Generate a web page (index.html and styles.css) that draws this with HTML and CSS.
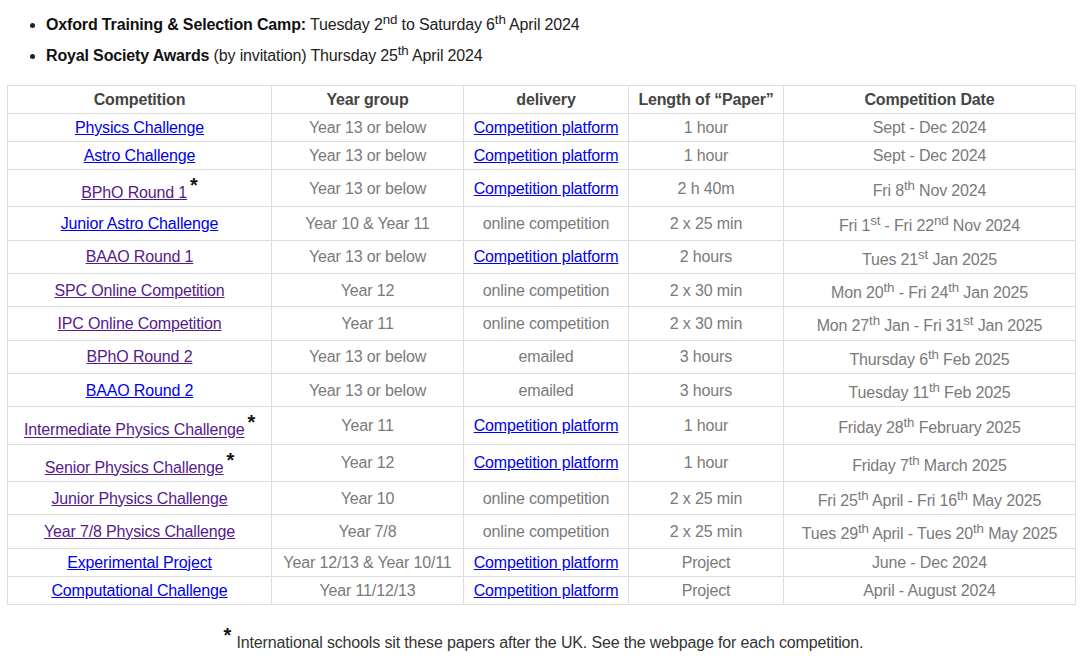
FILE: index.html
```html
<!DOCTYPE html>
<html lang="en">
<head>
<meta charset="utf-8">
<title>Competitions</title>
<link rel="stylesheet" href="styles.css">
</head>
<body>
<div class="page">
  <ul class="events">
    <li><b>Oxford Training &amp; Selection Camp:</b> Tuesday 2<sup>nd</sup> to Saturday 6<sup>th</sup> April 2024</li>
    <li><b>Royal Society Awards</b> (by invitation) Thursday 25<sup>th</sup> April 2024</li>
  </ul>

  <table class="comp">
    <colgroup>
      <col class="c1"><col class="c2"><col class="c3"><col class="c4"><col class="c5">
    </colgroup>
    <thead>
      <tr><th>Competition</th><th>Year group</th><th>delivery</th><th>Length of “Paper”</th><th>Competition Date</th></tr>
    </thead>
    <tbody>
      <tr><td><a href="#">Physics Challenge</a></td><td>Year 13 or below</td><td><a href="#">Competition platform</a></td><td>1 hour</td><td>Sept - Dec 2024</td></tr>
      <tr><td><a href="#">Astro Challenge</a></td><td>Year 13 or below</td><td><a href="#">Competition platform</a></td><td>1 hour</td><td>Sept - Dec 2024</td></tr>
      <tr><td><a class="v" href="#">BPhO Round 1</a><sup class="star">*</sup></td><td>Year 13 or below</td><td><a href="#">Competition platform</a></td><td>2 h 40m</td><td>Fri 8<sup>th</sup> Nov 2024</td></tr>
      <tr><td><a href="#">Junior Astro Challenge</a></td><td>Year 10 &amp; Year 11</td><td>online competition</td><td>2 x 25 min</td><td>Fri 1<sup>st</sup> - Fri 22<sup>nd</sup> Nov 2024</td></tr>
      <tr><td><a class="v" href="#">BAAO Round 1</a></td><td>Year 13 or below</td><td><a href="#">Competition platform</a></td><td>2 hours</td><td>Tues 21<sup>st</sup> Jan 2025</td></tr>
      <tr><td><a class="v" href="#">SPC Online Competition</a></td><td>Year 12</td><td>online competition</td><td>2 x 30 min</td><td>Mon 20<sup>th</sup> - Fri 24<sup>th</sup> Jan 2025</td></tr>
      <tr><td><a class="v" href="#">IPC Online Competition</a></td><td>Year 11</td><td>online competition</td><td>2 x 30 min</td><td>Mon 27<sup>th</sup> Jan - Fri 31<sup>st</sup> Jan 2025</td></tr>
      <tr><td><a class="v" href="#">BPhO Round 2</a></td><td>Year 13 or below</td><td>emailed</td><td>3 hours</td><td>Thursday 6<sup>th</sup> Feb 2025</td></tr>
      <tr><td><a href="#">BAAO Round 2</a></td><td>Year 13 or below</td><td>emailed</td><td>3 hours</td><td>Tuesday 11<sup>th</sup> Feb 2025</td></tr>
      <tr><td><a class="v" href="#">Intermediate Physics Challenge</a><sup class="star">*</sup></td><td>Year 11</td><td><a href="#">Competition platform</a></td><td>1 hour</td><td>Friday 28<sup>th</sup> February 2025</td></tr>
      <tr><td><a class="v" href="#">Senior Physics Challenge</a><sup class="star">*</sup></td><td>Year 12</td><td><a href="#">Competition platform</a></td><td>1 hour</td><td>Friday 7<sup>th</sup> March 2025</td></tr>
      <tr><td><a class="v" href="#">Junior Physics Challenge</a></td><td>Year 10</td><td>online competition</td><td>2 x 25 min</td><td>Fri 25<sup>th</sup> April - Fri 16<sup>th</sup> May 2025</td></tr>
      <tr><td><a class="v" href="#">Year 7/8 Physics Challenge</a></td><td>Year 7/8</td><td>online competition</td><td>2 x 25 min</td><td>Tues 29<sup>th</sup> April - Tues 20<sup>th</sup> May 2025</td></tr>
      <tr><td><a href="#">Experimental Project</a></td><td>Year 12/13 &amp; Year 10/11</td><td><a href="#">Competition platform</a></td><td>Project</td><td>June - Dec 2024</td></tr>
      <tr><td><a href="#">Computational Challenge</a></td><td>Year 11/12/13</td><td><a href="#">Competition platform</a></td><td>Project</td><td>April - August 2024</td></tr>
    </tbody>
  </table>

  <p class="note"><sup class="star">*</sup> International schools sit these papers after the UK. See the webpage for each competition.</p>
</div>
</body>
</html>
```

FILE: styles.css
```css
html, body {
  margin: 0;
  padding: 0;
  background: #ffffff;
}

body {
  font-family: "Liberation Sans", Arial, sans-serif;
  font-size: 16px;
  letter-spacing: -0.15px;
  color: #222222;
}

.page {
  padding: 9px 0 0 7px;
}

.events {
  margin: 0 0 14px 0;
  padding-left: 39px;
  color: #222222;
}

.events li {
  line-height: 31px;
}

.events b {
  color: #111111;
}

.events sup {
  line-height: 0;
}

.comp {
  border-collapse: collapse;
  table-layout: fixed;
  width: 1068px;
}

.c1 { width: 264px; }
.c2 { width: 192px; }
.c3 { width: 165px; }
.c4 { width: 155px; }
.c5 { width: 292px; }

.comp th,
.comp td {
  border: 1px solid #dddddd;
  padding: 4px 4px;
  text-align: center;
  vertical-align: middle;
  line-height: 19px;
  white-space: nowrap;
}

.comp th {
  color: #444444;
  font-weight: bold;
}

.comp td {
  color: #7a7a7a;
}

a {
  color: #0000ee;
  text-decoration: underline;
}

a.v {
  color: #551a8b;
}

sup.star {
  font-size: 20px;
  font-weight: bold;
  color: #111111;
  line-height: normal;
  margin-left: 3px;
}

.note {
  margin: 19px 0 0 0;
  text-align: center;
  color: #333333;
}

.note sup.star {
  margin-left: 0;
  margin-right: 1px;
}
```
